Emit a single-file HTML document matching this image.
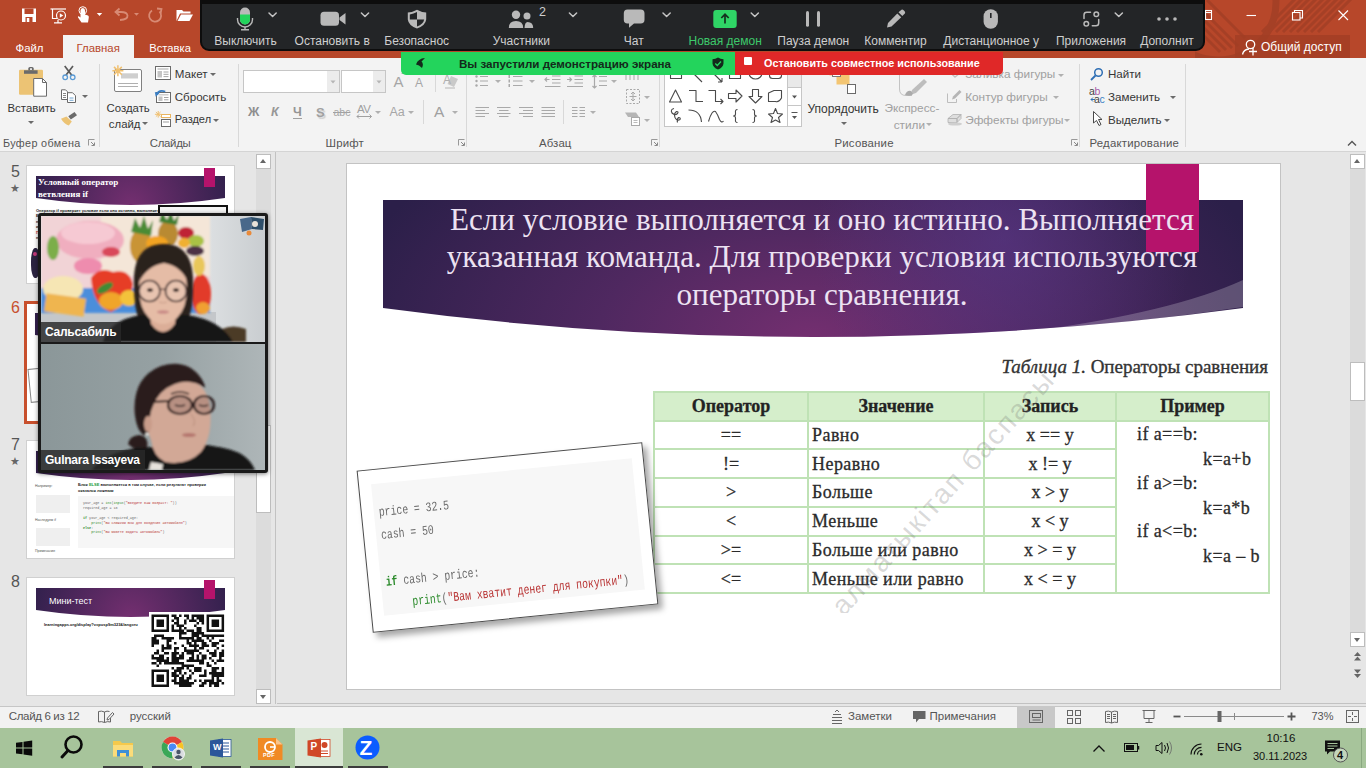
<!DOCTYPE html>
<html lang="ru">
<head>
<meta charset="utf-8">
<title>PowerPoint</title>
<style>
*{box-sizing:border-box;margin:0;padding:0}
html,body{width:1366px;height:768px;overflow:hidden;background:#e6e6e6;font-family:"Liberation Sans","DejaVu Sans",sans-serif;font-size:13px;color:#262626}
.abs{position:absolute}
#titlebar{position:absolute;left:0;top:0;width:1366px;height:58px;background:#b7472a}
#ribbon{position:absolute;left:0;top:58px;width:1366px;height:94px;background:#f3f3f3;border-bottom:1px solid #d4d4d4}
#work{position:absolute;left:0;top:152px;width:1366px;height:553px;background:#e6e6e6}
#status{position:absolute;left:0;top:706px;width:1366px;height:22px;background:#f2f2f2;border-top:1px solid #c6c6c6}
#taskbar{position:absolute;left:0;top:728px;width:1366px;height:40px;background:#a7c49b}
.t{position:absolute;white-space:nowrap;line-height:1}
.tab{position:absolute;top:42.800px;color:#fff;font-size:13px;white-space:nowrap;line-height:1}
.glabel{position:absolute;top:137.500px;font-size:12px;color:#555;white-space:nowrap;line-height:1;letter-spacing:.2px}
.gsep{position:absolute;top:66px;width:1px;height:80px;background:#d8d8d8}
.rt{position:absolute;font-size:13px;color:#363636;white-space:nowrap;line-height:1}
.dis{color:#a0a0a0}
#zoombar{position:absolute;left:200px;top:-2px;width:1005px;height:53px;background:#232527;border:2px solid #0d0d0d;border-radius:0 0 9px 9px}
.zl{position:absolute;top:35px;font-size:12px;color:#cfcfcf;white-space:nowrap;line-height:1;transform:translateX(-50%)}

#slide{position:absolute;left:346px;top:163px;width:935px;height:527px;background:#fff;border:1px solid #c3c3c3;overflow:hidden}
#slidein{position:absolute;left:-347px;top:-164px;width:1366px;height:768px}
#title{position:absolute;left:392px;top:200.500px;width:860px;text-align:center;font-family:"Liberation Serif",serif;font-size:31.1px;line-height:37.900px;color:#ece2f2;white-space:nowrap}
#cap{position:absolute;right:98px;top:357px;font-family:"Liberation Serif",serif;font-size:19px;-webkit-text-stroke:.35px #333;color:#333;white-space:nowrap;line-height:20px}
#tbl{position:absolute;left:653px;top:391px;width:615px;-webkit-text-stroke:.3px #2b2b2b;border-collapse:collapse;font-family:"Liberation Serif",serif;font-size:18px;color:#2b2b2b;table-layout:fixed}
#tbl td,#tbl th{border:2px solid #bfe2b5;height:28.8px;padding:0;line-height:20px;vertical-align:middle;white-space:nowrap}
#tbl th{background:#d5eecb;font-weight:bold;height:28.5px;color:#222}
#tbl td.c{text-align:center}
#tbl td.l{padding-left:3px;letter-spacing:.45px}
#ex{position:relative;vertical-align:top!important}
#ex div{position:absolute;line-height:20px;white-space:nowrap;letter-spacing:.4px}
#wm{position:absolute;left:197px;top:250px;font-size:28px;line-height:32px;color:rgba(110,110,110,.26);transform:rotate(-48deg);transform-origin:0 50%;white-space:nowrap;letter-spacing:2.100px}
#card{position:absolute;left:364px;top:455.500px;width:287px;height:163px;background:#fff;border:1px solid #4a4a4a;transform:rotate(-5.7deg);box-shadow:4px 5px 6px rgba(0,0,0,.35)}
#card .in{position:absolute;left:12px;top:14px;width:262px;height:132px;background:#f7f7f7}
#card .ln{position:absolute;font-family:"Liberation Mono",monospace;font-size:9.8px;line-height:1;white-space:pre;color:#6a6a6a;transform:scale(1,1.35);transform-origin:0 0}

.th{position:absolute;left:26px;width:209px;height:119px;background:#fff;border:1px solid #d0d0d0;overflow:hidden}
.thn{position:absolute;left:11px;font-size:16px;color:#555;line-height:1}
.star{position:absolute;left:10px;font-size:11px;color:#666;line-height:1}
.sbtn{position:absolute;width:15px;height:15px;background:#fff;border:1px solid #bdbdbd}
.sbtn:after{content:"";position:absolute;left:3px;top:4px;border:3.500px solid transparent}
.sbtn.up:after{border-bottom:4px solid #666;border-top:0}
.sbtn.dn:after{border-top:4px solid #666;border-bottom:0;top:5px}
#vid{position:absolute;left:38px;top:213px;width:230px;height:260px;background:#1a1a1a;border-radius:3px;box-shadow:0 1px 4px rgba(0,0,0,.5)}
.vname{position:absolute;left:0;bottom:0;height:20px;background:rgba(40,40,40,.82);color:#fff;font-weight:bold;font-size:12px;line-height:20px;letter-spacing:-.25px;padding:0 5px 0 4px;white-space:nowrap}

.rt{font-size:11.400px}
.arr{position:absolute;width:0;height:0;border-left:3px solid transparent;border-right:3px solid transparent;border-top:3px solid #6a6a6a;margin-left:-.5px}
.arr.d{border-top-color:#b0b0b0}
.lnch{position:absolute;top:139px;width:7px;height:7px}

.st{position:absolute;top:711px;font-size:11.500px;color:#555;white-space:nowrap;line-height:1}
.tk{position:absolute;font-size:11.500px;color:#111;white-space:nowrap;line-height:1}
.ul{position:absolute;top:766px;height:2px;background:#3c3c3c}
</style>
</head>
<body>
<div id="titlebar">
<svg class="abs" style="left:1195px;top:0" width="171" height="58" viewBox="1195 0 171 58">
 <g fill="none" stroke="#a03e25" opacity=".75">
  <circle cx="1218" cy="2" r="58" stroke-width="7"/>
  <path d="M1296 -2L1262 32" stroke-width="3"/><path d="M1303 -2L1269 32" stroke-width="3"/><path d="M1310 -2L1276 32" stroke-width="3"/><path d="M1317 -2L1283 32" stroke-width="3"/><path d="M1324 -2L1290 32" stroke-width="3"/><path d="M1331 -2L1297 32" stroke-width="3"/><path d="M1338 -2L1304 32" stroke-width="3"/><path d="M1345 -2L1311 32" stroke-width="3"/><path d="M1352 -2L1318 32" stroke-width="3"/>
  <path d="M1200 8L1238 46" stroke-width="3"/><path d="M1200 16L1232 48" stroke-width="3"/><path d="M1200 24L1226 50" stroke-width="3"/><path d="M1200 32L1220 52" stroke-width="3"/><path d="M1207 0L1245 38" stroke-width="3"/>
 </g>
 <rect x="1235" y="35" width="115" height="23" fill="#a13d24" opacity=".8"/>
 <g fill="none" stroke="#fff" stroke-width="1.100">
  <path d="M1246.500 15.500H1256"/><rect x="1292.500" y="12.500" width="7.500" height="7.500"/><path d="M1294.500 12.500V10.500H1302.500V18H1300"/><path d="M1338.500 10.500L1348 20M1348 10.500L1338.500 20"/>
  <rect x="1205.500" y="10.500" width="6" height="9"/><path d="M1205.500 12.500H1211.500"/>
  <circle cx="1250.500" cy="44.500" r="4.200" stroke-width="1.300"/><path d="M1242.500 54.500Q1243.500 49.500 1249 49" stroke-width="1.300"/><path d="M1249 51.500H1257M1253 47.500V55.500" stroke-width="1.300"/>
 </g>
</svg>
<div class="t" style="left:1261px;top:41px;font-size:12px;color:#fff">Общий доступ</div>
<svg class="abs" style="left:0;top:0" width="200" height="34" viewBox="0 0 200 34">
 <g fill="#fff">
  <path d="M22 8.500H36V22H22Z"/><rect x="24.500" y="8.500" width="9" height="5.500" fill="#b7472a"/><rect x="25.500" y="17" width="7" height="5" fill="#b7472a"/><rect x="26.800" y="18" width="2.500" height="4" fill="#fff"/>
 </g>
 <g fill="none" stroke="#fff" stroke-width="1.200">
  <path d="M50.500 9H66"/><path d="M52.500 9V18.500H57"/><circle cx="61" cy="15.500" r="4.500"/><path d="M59.800 13.300V17.700L63.300 15.500Z" fill="#fff" stroke="none"/><path d="M58 20V22.500M54 22.800H62"/>
 </g>
 <g fill="#fff"><path d="M80.500 10.500Q80.500 8 82.800 8Q85 8 85 10.500V14.500L88 15.500Q89 16 88.800 17.500L88 22.500H81.500L78 17.500Q77.500 16.300 78.800 16.300L80.500 17.500Z"/><path d="M96.800 13H102.200L99.500 16Z"/></g>
 <circle cx="82.800" cy="10.500" r="3.800" fill="none" stroke="#fff" stroke-width="1"/>
 <g fill="none" stroke="#d88a74" stroke-width="1.800"><path d="M120 20Q128 19.500 127.500 15.500Q127 12 121 12H116"/><path d="M119.500 8.500L115.500 12L119.500 15.500"/><path d="M159.500 11.500A6 6 0 1 1 152 10.500"/><path d="M157 8.500L161.500 9L160.500 13.500"/></g>
 <path d="M134 13H139L136.500 15.800Z" fill="#d88a74"/>
 <g fill="#fff"><path d="M176.500 21V10H182L183.500 11.500H190.500V13.500H180L176.500 21Z"/><path d="M181 14.500H193L189.500 21H177.500Z"/></g>
</svg>
<div class="abs" style="left:63px;top:35px;width:71px;height:23px;background:#f3f3f3"></div>
<div class="tab" style="left:15.500px;font-size:11.400px">Файл</div>
<div class="tab" style="left:76.500px;font-size:11.400px;color:#b7472a">Главная</div>
<div class="tab" style="left:149.300px;font-size:11.200px">Вставка</div>
</div>
<div id="ribbon"></div>
<div id="rib">
<div class="gsep" style="left:99px;top:64px;height:83px"></div>
<div class="gsep" style="left:238px;top:64px;height:83px"></div>
<div class="gsep" style="left:466px;top:64px;height:83px"></div>
<div class="gsep" style="left:659px;top:64px;height:83px"></div>
<div class="gsep" style="left:1079px;top:64px;height:83px"></div>
<div class="gsep" style="left:1185px;top:64px;height:83px"></div><div class="gsep" style="left:435px;top:70px;height:22px"></div><div class="gsep" style="left:423px;top:100px;height:24px"></div><div class="gsep" style="left:563px;top:100px;height:24px"></div>
<div class="rt " style="left:7.5px;top:103.4px;font-size:11.4px;">Вставить</div>
<div class="arr" style="left:28.5px;top:121.2px"></div>
<div class="rt " style="left:106.5px;top:103.4px;font-size:11.4px;">Создать</div>
<div class="rt " style="left:108.8px;top:118.8px;font-size:11.4px;">слайд</div>
<div class="arr" style="left:142.5px;top:122.0px"></div>
<div class="rt " style="left:174.7px;top:68.0px;font-size:11.6px;">Макет</div>
<div class="arr" style="left:210.8px;top:72.5px"></div>
<div class="rt " style="left:174.7px;top:91.1px;font-size:11.6px;">Сбросить</div>
<div class="rt " style="left:174.7px;top:114.3px;font-size:11px;">Раздел</div>
<div class="arr" style="left:213.5px;top:118.5px"></div>
<div class="arr" style="left:82.9px;top:94.5px"></div>
<div class="rt " style="left:807.4px;top:103.0px;font-size:12.0px;">Упорядочить</div>
<div class="arr" style="left:841.2px;top:122.0px"></div>
<div class="rt dis" style="left:884.5px;top:103.0px;font-size:11.8px;">Экспресс-</div>
<div class="rt dis" style="left:893.7px;top:119.5px;font-size:11.8px;">стили</div>
<div class="arr d" style="left:926.8px;top:123.0px"></div>
<div class="rt dis" style="left:965.2px;top:69.1px;font-size:11.8px;">Заливка фигуры</div>
<div class="arr d" style="left:1058.5px;top:73.5px"></div>
<div class="rt dis" style="left:965.2px;top:91.5px;font-size:11.8px;">Контур фигуры</div>
<div class="arr d" style="left:1053.3px;top:96.0px"></div>
<div class="rt dis" style="left:965.2px;top:114.5px;font-size:11.8px;">Эффекты фигуры</div>
<div class="arr d" style="left:1064.8px;top:119.0px"></div>
<div class="rt " style="left:1108px;top:68.3px;font-size:11.6px;">Найти</div>
<div class="rt " style="left:1108px;top:90.8px;font-size:11.6px;">Заменить</div>
<div class="arr" style="left:1170.5px;top:95.5px"></div>
<div class="rt " style="left:1108px;top:114.3px;font-size:11.6px;">Выделить</div>
<div class="arr" style="left:1164.0px;top:119.0px"></div>
<div class="glabel" style="left:3px;letter-spacing:.35px;font-size:10.800px">Буфер обмена</div>
<div class="glabel" style="left:149.800px;font-size:11.400px;letter-spacing:-.3px">Слайды</div>
<div class="glabel" style="left:325.500px;font-size:11.400px;letter-spacing:.2px">Шрифт</div>
<div class="glabel" style="left:539px;font-size:11.400px;letter-spacing:.1px">Абзац</div>
<div class="glabel" style="left:834.500px;font-size:11.400px">Рисование</div>
<div class="glabel" style="left:1089.500px;font-size:11.400px">Редактирование</div>
<svg class="lnch" style="left:88px" viewBox="0 0 7 7"><path d="M.5 6.500V.5H6.500" fill="none" stroke="#999" stroke-width="1"/><path d="M3 3L6 6M6.500 3.500V6.500H3.500" fill="none" stroke="#888" stroke-width="1"/></svg>
<svg class="lnch" style="left:458px" viewBox="0 0 7 7"><path d="M.5 6.500V.5H6.500" fill="none" stroke="#999" stroke-width="1"/><path d="M3 3L6 6M6.500 3.500V6.500H3.500" fill="none" stroke="#888" stroke-width="1"/></svg>
<svg class="lnch" style="left:651px" viewBox="0 0 7 7"><path d="M.5 6.500V.5H6.500" fill="none" stroke="#999" stroke-width="1"/><path d="M3 3L6 6M6.500 3.500V6.500H3.500" fill="none" stroke="#888" stroke-width="1"/></svg>
<svg class="lnch" style="left:1071px" viewBox="0 0 7 7"><path d="M.5 6.500V.5H6.500" fill="none" stroke="#999" stroke-width="1"/><path d="M3 3L6 6M6.500 3.500V6.500H3.500" fill="none" stroke="#888" stroke-width="1"/></svg>
<svg class="abs" style="left:0;top:58px" width="1366" height="94" viewBox="0 58 1366 94">
<!-- paste -->
<rect x="19" y="69.800" width="24" height="25" rx="1.200" fill="#ecc374"/><rect x="24" y="70.300" width="13.600" height="3.500" fill="#6b6b6b"/><path d="M28.300 70.500V68.500Q28.300 67 29.800 67H32.200Q33.700 67 33.700 68.500V70.500Z" fill="#6b6b6b"/><rect x="30" y="68.300" width="2" height="1.600" fill="#f3f3f3"/>
<path d="M33.700 78.500H42.500L46.500 82.500V96.200H33.700Z" fill="#fff" stroke="#6b6b6b" stroke-width="1"/><path d="M42.500 78.500V82.500H46.500" fill="none" stroke="#6b6b6b" stroke-width="1"/>
<!-- cut -->
<g fill="none" stroke="#5a5a5a" stroke-width="1.700"><path d="M64.700 66L71.800 75.200M73 66L65.900 75.200"/></g><circle cx="65.200" cy="77.300" r="2.300" fill="none" stroke="#5b9bd5" stroke-width="1.300"/><circle cx="72.700" cy="77.300" r="2.300" fill="none" stroke="#5b9bd5" stroke-width="1.300"/>
<!-- copy -->
<g fill="#fff" stroke="#6a6a6a"><path d="M61.500 89.800H65.500L67.500 91.800V99.500H61.500Z"/><path d="M67.500 92.700H72.500L75.500 95.700V102.500H67.500Z"/></g><path d="M63 93.500H66M63 95.500H66M63 97.500H66" stroke="#6a6a6a" stroke-width=".8"/><path d="M69.500 98H73.500M69.500 100.300H73.500" stroke="#4f8fc6" stroke-width=".8"/>
<!-- painter -->
<path d="M68.300 116.200L74.500 112L77 115.200L70.800 119.600Z" fill="#6a6a6a"/><path d="M61 118.800L66.500 116.400L71.800 121.400L68.800 125.500Q64 124 61 118.800Z" fill="#ecc374"/>
<!-- new slide -->
<rect x="114.500" y="69.500" width="27" height="22" rx="1.500" fill="#fff" stroke="#808080"/><rect x="121" y="73.300" width="17" height="5.200" fill="#cfcfcf"/><path d="M118 83.500H138M118 86.500H138" stroke="#b0b0b0"/>
<g stroke="#f0c070" stroke-width="1.500"><path d="M117.900 65.300V76.300M112.400 70.800H123.400M114 66.900L121.800 74.700M121.800 66.900L114 74.700"/></g>
<!-- layout -->
<rect x="155.500" y="66.500" width="15" height="13" fill="#fff" stroke="#6a6a6a"/><path d="M157.500 69H168.500" stroke="#c8c8c8" stroke-width="1.600"/><rect x="157.500" y="71" width="4.500" height="6.500" fill="#c4c4c4"/><path d="M163.500 72H168.500M163.500 74.300H168.500M163.500 76.600H168.500" stroke="#9a9a9a" stroke-width=".9"/>
<!-- reset -->
<rect x="156.500" y="92.500" width="14" height="10" fill="#fff" stroke="#6a6a6a"/><path d="M158.500 94.800H168.500" stroke="#c8c8c8" stroke-width="1.300"/><rect x="158.500" y="96.500" width="4" height="4.500" fill="#c4c4c4"/><path d="M164 97.500H168.500M164 99.800H168.500" stroke="#9a9a9a" stroke-width=".9"/>
<path d="M156.800 94.500Q158.500 89.500 165.300 91.500" fill="none" stroke="#3b7fc4" stroke-width="1.700"/><path d="M154.800 92L159.500 93.300L155.700 96.800Z" fill="#3b7fc4"/>
<!-- section -->
<rect x="161.500" y="114.500" width="9" height="3" fill="#fff" stroke="#eab560"/><rect x="161.500" y="119.500" width="9" height="7" fill="#fff" stroke="#6a6a6a"/><path d="M163 122H169" stroke="#c4c4c4" stroke-width="1.600"/>
<g stroke="#f0c070" stroke-width="1"><path d="M158.200 111V117.600M154.900 114.300H161.500M155.900 112L160.500 116.600M160.500 112L155.900 116.600"/></g>
<!-- font combos -->
<rect x="243.500" y="70.500" width="96" height="22" fill="#fff" stroke="#c6c6c6"/><rect x="327" y="71" width="12" height="21" fill="#ececec"/>
<rect x="341.500" y="70.500" width="44" height="22" fill="#fff" stroke="#c6c6c6"/><rect x="373" y="71" width="12" height="21" fill="#ececec"/>
<path d="M330.500 80.500H335.500L333 83.500Z M376.500 80.500H381.500L379 83.500Z" fill="#b5b5b5"/>
<!-- paragraph icons (disabled grey) -->
<g stroke="#a9a9a9" stroke-width="1.200" fill="none">
 <path d="M480 76.500H488M480 81H488M480 85.500H488"/>
 <path d="M513 76.500H522.500M513 81H522.500M513 85.500H522.500"/>
 <path d="M552 76H560.500M552 79.500H560.500M552 83H560.500M545 86.500H560.500"/><path d="M549.500 79.500H545M547 77.500L545 79.500L547 81.500"/>
 <path d="M574.500 76H583M574.500 79.500H583M574.500 83H583M567 86.500H583"/><path d="M567 79.500H571.500M569.500 77.500L571.500 79.500L569.500 81.500"/>
 <path d="M599 76.500H607M599 81H607M599 85.500H607"/><path d="M594.500 75V88M592.500 77L594.500 75L596.500 77M592.500 86L594.500 88L596.500 86"/>
 <path d="M475.500 107.500H489M475.500 110.500H485M475.500 113.500H489M475.500 116.500H485"/>
 <path d="M497 107.500H510.500M499 110.500H508.500M497 113.500H510.500M499 116.500H508.500"/>
 <path d="M519 107.500H533M523 110.500H533M519 113.500H533M523 116.500H533"/>
 <path d="M541.500 107.500H555M541.500 110.500H555M541.500 113.500H555M541.500 116.500H555"/>
 <path d="M572 107.500H577.500M579.500 107.500H585M572 110.500H577.500M579.500 110.500H585M572 113.500H577.500M579.500 113.500H585M572 116.500H577.500M579.500 116.500H585"/>
 <path d="M626 74V80M630 74V80M634 74V80M638 74V80" stroke-width="1"/>
 <rect x="626.500" y="89.500" width="13" height="14" stroke-dasharray="2 1.500" stroke-width="1"/><path d="M633 92V101M631 94L633 92L635 94M631 99L633 101L635 99M629.500 96.500H636.500" stroke-width="1"/>
 <rect x="631.500" y="117.500" width="8" height="8" fill="#fff" stroke-width="1"/><path d="M633.500 120.500H637.500M633.500 122.500H637.500" stroke-width=".8"/>
</g>
<path d="M625 112.500H636L639 117H628Z" fill="#b5b5b5"/>
<g fill="#a9a9a9"><circle cx="476.500" cy="76.500" r="1.200"/><circle cx="476.500" cy="81" r="1.200"/><circle cx="476.500" cy="85.500" r="1.200"/><rect x="508.500" y="75" width="1.500" height="3"/><rect x="508.500" y="79.500" width="1.500" height="3"/><rect x="508.500" y="84" width="1.500" height="3"/></g>
<!-- clear format icon -->
<path d="M451 76L458 79L454 87L447.500 84Z" fill="#c9c9c9"/><path d="M445 88H455" stroke="#b5b5b5"/>
<!-- font color underline etc -->
<path d="M293 118.500H302" stroke="#a0a0a0" stroke-width="1"/>
<path d="M333 112.500H350.500" stroke="#a0a0a0" stroke-width="1"/>
<path d="M357 116.500H371.500M359 114.500L357 116.500L359 118.500M369.500 114.500L371.500 116.500L369.500 118.500" stroke="#a0a0a0" stroke-width="1" fill="none"/>
<!-- shapes gallery -->
<rect x="664.500" y="66.500" width="137" height="60" fill="#fff" stroke="#c6c6c6"/><path d="M787.500 66.500V126.500M787.500 87.500H801.500M787.500 105.500H801.500" stroke="#c6c6c6" fill="none"/>
<rect x="788" y="67" width="13" height="20" fill="#e9e9e9"/>
<path d="M792 95.500H797L794.500 98.500Z" fill="#555"/><path d="M791.500 112.500H797.500" stroke="#555"/><path d="M792 116H797L794.500 119Z" fill="#555"/>
<g fill="none" stroke="#4a4a4a" stroke-width="1.100" stroke-linejoin="round">
 <rect x="670.500" y="68.500" width="11" height="10"/><path d="M690 70L702 82M710 70L722 82M722 82V78M722 82H718"/><rect x="729.500" y="66.500" width="11" height="12"/><ellipse cx="755.500" cy="73" rx="6.500" ry="6"/><rect x="769.500" y="66.500" width="12" height="12" rx="3"/>
 <path d="M675.500 90L681.500 102H669.500Z"/>
 <path d="M689 90.500H696V101.500H703"/>
 <path d="M708.500 90.500H715.500V101.500H723M720.500 99L723 101.500L720.500 104"/>
 <path d="M728.500 93.500H736V90L742 96L736 102V98.500H728.500Z"/>
 <path d="M752.500 89.500H758.500V96.500H762L755.500 103L749 96.500H752.500Z"/>
 <path d="M768.500 93L774 90.500H781.500V98Q779 102.500 775.500 101.500H768.500Z"/>
 <path d="M674 108.500Q670 109.500 672 113Q675 116 677.500 113.500Q679 111.500 676.500 111.500Q673.500 113.500 675 117.500Q677 121.500 680 119.500Q681 117.500 678.500 117.500Q676.500 119.500 677.500 122.500"/>
 <path d="M688.500 110Q700.500 110 701.500 122"/>
 <path d="M708.500 121.500Q712 109.500 715.500 111.500Q718 115 719.500 119.500Q721.500 123.500 723.500 121"/>
 <path d="M737.500 109.500Q735 109.500 735.500 112.500V114Q735.500 116 733.500 116Q735.500 116 735.500 118V119.500Q735 122.500 737.500 122.500"/>
 <path d="M752.500 109.500Q755 109.500 754.500 112.500V114Q754.500 116 756.500 116Q754.500 116 754.500 118V119.500Q755 122.500 752.500 122.500"/>
 <path d="M775.500 108.500L777.500 113.500L782.500 114L778.500 117.500L780 122.500L775.500 120L771 122.500L772.500 117.500L768.500 114L773.500 113.500Z"/>
</g>
<!-- arrange -->
<rect x="829.500" y="64.500" width="11" height="11" fill="#f3c572"/><rect x="836.500" y="71.500" width="13" height="13" fill="#f3c572"/><rect x="832.500" y="68.500" width="8" height="8" fill="#fff" stroke="#7a7a7a"/><rect x="847.500" y="84.500" width="8" height="9" fill="#fff" stroke="#6a6a6a"/>
<!-- quick styles -->
<path d="M899.500 62V89Q899.500 95.500 906 95.500H912" fill="none" stroke="#c3c3c3"/><path d="M924 79L927 82L916 93L910 95L912 90Z" fill="#bdbdbd"/><path d="M905 95Q907 90 911 91L913 94Q911 97 905 95Z" fill="#ababab"/>
<!-- shape fill/outline/effects icons -->
<path d="M947.500 70L955 77L960 73" fill="none" stroke="#c3c3c3" stroke-width="1.400"/>
<path d="M947.500 93.500V102.500H956.500V99" fill="none" stroke="#bdbdbd"/><path d="M953 96.500L959.500 90L961.500 92L955 98.500L952 99.500Z" fill="#b5b5b5"/>
<path d="M948 118.500L953 114.500H961L957 118.500Z M948 118.500H957V122.500H948Z M957 118.500L961 114.500V118.500L957 122.500Z" fill="#dedede" stroke="#b0b0b0" stroke-width=".8"/>
<ellipse cx="955" cy="124" rx="7" ry="1.600" fill="#cfcfcf"/>
<!-- find/replace/select -->
<circle cx="1098.500" cy="72.500" r="3.800" fill="none" stroke="#2f6fb4" stroke-width="1.500"/><path d="M1095.500 75.500L1091 80" stroke="#2f6fb4" stroke-width="1.800"/>
<path d="M1093.500 111.500V123L1096.500 120.500L1099 125.500L1101 124.500L1098.500 119.500H1102Z" fill="#fff" stroke="#4a4a4a" stroke-width="1"/>
<path d="M1093 101.500L1091 99.500L1093 97.500M1091 99.500H1095" fill="none" stroke="#2f6fb4" stroke-width="1"/>
<!-- collapse -->
<path d="M1348 145.500L1352 141.500L1356 145.500" fill="none" stroke="#555" stroke-width="1.400"/>
</svg>
<div class="t" style="left:1089px;top:88px;font-size:10.500px;color:#444;line-height:7.500px;letter-spacing:-.3px">a<span style="color:#a85aa8">b</span><br><span style="margin-left:5px">a<span style="color:#3b7fc4">c</span></span></div>
<div class="t dis" style="left:393.500px;top:74px;font-size:15px;color:#a6a6a6">A</div><div class="t" style="left:415px;top:77px;font-size:12px;color:#a6a6a6">A</div>
<div class="arr d" style="left:401px;top:72px;transform:rotate(180deg);border-width:0 2px 2.500px 2px;border-style:solid;border-color:transparent transparent #b5b5b5 transparent;transform:none"></div>
<div class="t" style="left:443px;top:74px;font-size:12px;color:#b0b0b0">A</div>
<div class="t" style="left:248px;top:106px;font-size:12.500px;font-weight:bold;color:#8e8e8e">Ж</div>
<div class="t" style="left:271px;top:106px;font-size:12.500px;font-style:italic;font-weight:bold;color:#979797">К</div>
<div class="t" style="left:293px;top:106px;font-size:12.500px;font-weight:bold;color:#959595">Ч</div>
<div class="t" style="left:316px;top:106px;font-size:13px;font-weight:bold;color:#a0a0a0;text-shadow:1.500px 1.500px 1px #cfcfcf">S</div>
<div class="t" style="left:333.500px;top:107px;font-size:10.500px;color:#a6a6a6">abc</div>
<div class="t" style="left:357px;top:103.500px;font-size:11.500px;color:#a0a0a0;letter-spacing:-.6px">AV</div>
<div class="t" style="left:389.500px;top:106px;font-size:12.500px;color:#a6a6a6">Aa</div>
<div class="t" style="left:434px;top:104px;font-size:15.500px;color:#a0a0a0">A</div>
<div class="arr d" style="left:375.0px;top:111.0px"></div><div class="arr d" style="left:408.8px;top:111.0px"></div><div class="arr d" style="left:452.6px;top:111.0px"></div><div class="arr d" style="left:495.4px;top:79.5px"></div><div class="arr d" style="left:529.0px;top:79.5px"></div><div class="arr d" style="left:611.7px;top:79.5px"></div><div class="arr d" style="left:590.3px;top:111.0px"></div><div class="arr d" style="left:644.7px;top:95.5px"></div><div class="arr d" style="left:644.7px;top:118.5px"></div>
</div>
<div id="work"></div>

<div id="slide"><div id="slidein">
<svg class="abs" style="left:383px;top:200px" width="861" height="140" viewBox="0 0 861 140">
<defs>
<radialGradient id="bg" cx="430" cy="140" r="480" gradientUnits="userSpaceOnUse" gradientTransform="translate(0 140) scale(1 .55) translate(0 -140)">
<stop offset="0" stop-color="#742f70"/><stop offset=".45" stop-color="#4f2860"/><stop offset="1" stop-color="#2b1f49"/>
</radialGradient>
<radialGradient id="bg2" cx="620" cy="40" r="190" gradientUnits="userSpaceOnUse"><stop offset="0" stop-color="#5a3a8e" stop-opacity=".55"/><stop offset="1" stop-color="#5a3a8e" stop-opacity="0"/></radialGradient>
</defs>
<path d="M0 0H860V108Q430 166 0 108Z" fill="url(#bg)"/><path d="M0 0H860V108Q430 166 0 108Z" fill="url(#bg2)"/>
<path d="M860 80V107Q760 122 650 131Q790 112 860 80Z" fill="#fff" opacity=".22"/>
</svg>
<div class="abs" style="left:1146px;top:164px;width:53px;height:88px;background:#b5136b"></div>
<div id="title">Если условие выполняется и оно истинно. Выполняется<br>указанная команда. Для проверки условия используются<br>операторы сравнения.</div>
<div id="cap"><i>Таблица 1.</i> Операторы сравнения</div>
<table id="tbl">
<colgroup><col style="width:154px"><col style="width:176px"><col style="width:132px"><col style="width:153px"></colgroup>
<tr><th>Оператор</th><th>Значение</th><th>Запись</th><th>Пример</th></tr>
<tr><td class="c">==</td><td class="l">Равно</td><td class="c">x == y</td><td rowspan="6" id="ex"><div style="left:20px;top:2px">if a==b:</div><div style="left:86px;top:27px">k=a+b</div><div style="left:20px;top:51px">if a&gt;=b:</div><div style="left:86px;top:76px">k=a*b</div><div style="left:20px;top:99px">if a&lt;=b:</div><div style="left:86px;top:124px">k=a – b</div></td></tr>
<tr><td class="c">!=</td><td class="l">Неравно</td><td class="c">x != y</td></tr>
<tr><td class="c">&gt;</td><td class="l">Больше</td><td class="c">x &gt; y</td></tr>
<tr><td class="c">&lt;</td><td class="l">Меньше</td><td class="c">x &lt; y</td></tr>
<tr><td class="c">&gt;=</td><td class="l">Больше или равно</td><td class="c">x &gt; = y</td></tr>
<tr><td class="c">&lt;=</td><td class="l">Меньше или равно</td><td class="c">x &lt; = y</td></tr>
</table>
<div class="abs" style="left:640px;top:345px;width:640px;height:268px;overflow:hidden"><div id="wm">алматыкітап баспасы</div></div>
<div id="card"><div class="in"></div>
<div class="ln" style="left:17px;top:37px">price = 32.5</div>
<div class="ln" style="left:17px;top:60px">cash = 50</div>
<div class="ln" style="left:17px;top:107px"><b style="color:#2a8a2a">if</b> cash &gt; price:</div>
<div class="ln" style="left:18px;top:128.500px">    <span style="color:#2a8a2a">print</span>(<span style="color:#b83232">"Вам хватит денег для покупки"</span>)</div>
</div>
</div></div>

<div class="abs" style="left:1350px;top:154px;width:15px;height:493px;background:#dbdbdb"></div>
<div class="sbtn up" style="left:1350px;top:154px"></div>
<div class="sbtn dn" style="left:1350px;top:632px"></div>
<div class="abs" style="left:1350px;top:362px;width:15px;height:39px;background:#fff;border:1px solid #bdbdbd"></div>
<svg class="abs" style="left:1350px;top:650px" width="16" height="32" viewBox="0 0 16 32"><path d="M4 6L7.500 2L11 6Z M4 10.500L7.500 6.500L11 10.500Z M4 19.500L7.500 23.500L11 19.500Z M4 24L7.500 28L11 24Z" fill="#666"/></svg>
<!-- thumbnails pane -->
<div class="abs" style="left:256px;top:154px;width:15px;height:549px;background:#dcdcdc"></div>
<div class="abs" style="left:275px;top:152px;width:1px;height:552px;background:#c2c2c2"></div><div class="abs" style="left:277px;top:703px;width:1089px;height:1px;background:#c2c2c2"></div>
<div class="sbtn up" style="left:256px;top:154px"></div>
<div class="sbtn dn" style="left:256px;top:689px"></div>
<div class="abs" style="left:256px;top:425px;width:15px;height:88px;background:#fff;border:1px solid #bdbdbd"></div>
<div class="thn" style="top:164px">5</div><div class="star" style="top:183px">★</div>
<div class="thn" style="top:300px;color:#c8502d">6</div>
<div class="thn" style="top:437px">7</div><div class="star" style="top:456px">★</div>
<div class="thn" style="top:574px">8</div>
<div class="th" id="th5" style="top:165px">
 <svg class="abs" style="left:9px;top:10px" width="190" height="30" viewBox="0 0 190 30"><defs><radialGradient id="bg5" cx="95" cy="30" r="110" gradientUnits="userSpaceOnUse"><stop offset="0" stop-color="#742f70"/><stop offset="1" stop-color="#2b1f49"/></radialGradient></defs><path d="M0 0H189V22Q95 36 0 22Z" fill="url(#bg5)"/></svg>
 <div class="abs" style="left:177px;top:2px;width:11px;height:19px;background:#b5136b"></div>
 <div class="abs" style="left:11px;top:11px;font:bold 9px/11.5px 'Liberation Serif',serif;color:#fff;white-space:nowrap">Условный оператор<br>ветвления if</div>
 <div class="abs" style="left:9px;top:42px;font:bold 4px/5px 'Liberation Sans',sans-serif;color:#222;white-space:nowrap">Оператор if проверяет условие если оно истинно, выполняет действие</div>
 <div class="abs" style="left:131px;top:39px;width:70px;height:30px;border:2px solid #111;background:#f4f4f4"></div>
<div class="abs" style="left:9px;top:47px;font:bold 4px/5.500px 'Liberation Sans',sans-serif;color:#222;white-space:nowrap">Если условие истинно — выполняется блок кода<br>после двоеточия с отступом<br>иначе блок пропускается<br><span style="color:#c33">Пример</span><br>программы</div>
 <div class="abs" style="left:4px;top:82px;width:9px;height:30px;border-radius:45%;background:#2b2340"></div><div class="abs" style="left:6px;top:86px;width:4px;height:4px;border-radius:50%;background:#c4387a"></div>
</div>
<div class="abs" style="left:24px;top:301px;width:214px;height:123px;border:3px solid #c8502d;background:#fff;overflow:hidden"><svg class="abs" style="left:8px;top:9px" width="190" height="30" viewBox="0 0 190 30"><path d="M0 0H189V22Q95 36 0 22Z" fill="url(#bg5)"/></svg><div class="abs" style="left:2px;top:62px;width:60px;height:34px;border:1px solid #888;transform:rotate(-5.700deg);background:#fff"></div></div>
<div class="th" id="th7" style="top:440px">
 <svg class="abs" style="left:9px;top:10px" width="190" height="30" viewBox="0 0 190 30"><path d="M0 0H189V22Q95 36 0 22Z" fill="url(#bg5)"/></svg>
 <div class="abs" style="left:51px;top:41px;font:bold 4px/6px 'Liberation Sans',sans-serif;color:#222;white-space:nowrap">Блок <span style="color:#1a9a3a">ELSE</span> выполняется в том случае, если результат проверки<br>оказался ложным</div>
 <div class="abs" style="left:51px;top:55px;width:156px;height:52px;background:#f6f6f6"></div>
 <div class="abs" style="left:56px;top:60px;font:3.4px/4.9px 'Liberation Mono',monospace;color:#666;white-space:pre">your_age = <span style="color:#2a8a2a">int</span>(<span style="color:#2a8a2a">input</span>(<span style="color:#b83232">"Введите ваш возраст: "</span>))
required_age = 18

<b style="color:#2a8a2a">if</b> your_age &lt; required_age:
    <span style="color:#2a8a2a">print</span>(<span style="color:#b83232">"Вы слишком юны для вождения автомобиля"</span>)
<b style="color:#2a8a2a">else</b>:
    <span style="color:#2a8a2a">print</span>(<span style="color:#b83232">"Вы можете водить автомобиль"</span>)</div>
 <div class="abs" style="left:8px;top:43px;font:3.5px/5px 'Liberation Sans',sans-serif;color:#555">Например:</div>
 <div class="abs" style="left:9px;top:54px;width:34px;height:18px;background:#efefef"></div>
 <div class="abs" style="left:8px;top:77px;font:3.5px/5px 'Liberation Sans',sans-serif;color:#555">Наследуем if</div>
 <div class="abs" style="left:9px;top:87px;width:34px;height:18px;background:#efefef"></div>
 <div class="abs" style="left:8px;top:108px;font:3.5px/5px 'Liberation Sans',sans-serif;color:#555">Примечание</div>
</div>
<div class="th" id="th8" style="top:577px">
 <svg class="abs" style="left:9px;top:10px" width="190" height="30" viewBox="0 0 190 30"><path d="M0 0H189V22Q95 36 0 22Z" fill="url(#bg5)"/></svg>
 <div class="abs" style="left:177px;top:2px;width:11px;height:19px;background:#b5136b"></div>
 <div class="abs" style="left:22px;top:18px;font:9px/11px 'Liberation Sans',sans-serif;color:#fff;white-space:nowrap">Мини-тест</div>
 <div class="abs" style="left:17px;top:44px;font:bold 4px/5px 'Liberation Sans',sans-serif;color:#111;white-space:nowrap">learningapps.org/display?v=pusp9m323&amp;lang=ru</div>
 <svg class="abs" id="qr" style="left:122.200px;top:34.200px" width="77.600" height="77.600" viewBox="-1 -1 31 31"><rect x="-1" y="-1" width="31" height="31" fill="#fff"/><path d="M0 0h7v1h-7zM8 0h2v1h-2zM11 0h1v1h-1zM13 0h2v1h-2zM16 0h5v1h-5zM22 0h7v1h-7zM0 1h1v1h-1zM6 1h1v1h-1zM9 1h2v1h-2zM14 1h1v1h-1zM16 1h1v1h-1zM18 1h3v1h-3zM22 1h1v1h-1zM28 1h1v1h-1zM0 2h1v1h-1zM2 2h3v1h-3zM6 2h1v1h-1zM8 2h1v1h-1zM10 2h1v1h-1zM13 2h1v1h-1zM15 2h3v1h-3zM19 2h2v1h-2zM22 2h1v1h-1zM24 2h3v1h-3zM28 2h1v1h-1zM0 3h1v1h-1zM2 3h3v1h-3zM6 3h1v1h-1zM9 3h2v1h-2zM13 3h1v1h-1zM18 3h1v1h-1zM20 3h1v1h-1zM22 3h1v1h-1zM24 3h3v1h-3zM28 3h1v1h-1zM0 4h1v1h-1zM2 4h3v1h-3zM6 4h1v1h-1zM8 4h1v1h-1zM10 4h3v1h-3zM17 4h1v1h-1zM22 4h1v1h-1zM24 4h3v1h-3zM28 4h1v1h-1zM0 5h1v1h-1zM6 5h1v1h-1zM8 5h1v1h-1zM11 5h1v1h-1zM13 5h1v1h-1zM18 5h2v1h-2zM22 5h1v1h-1zM28 5h1v1h-1zM0 6h7v1h-7zM8 6h5v1h-5zM14 6h3v1h-3zM18 6h2v1h-2zM22 6h7v1h-7zM11 7h3v1h-3zM16 7h5v1h-5zM1 8h4v1h-4zM11 8h1v1h-1zM16 8h3v1h-3zM20 8h9v1h-9zM0 9h2v1h-2zM4 9h5v1h-5zM11 9h6v1h-6zM18 9h2v1h-2zM22 9h1v1h-1zM24 9h1v1h-1zM0 10h3v1h-3zM6 10h2v1h-2zM14 10h1v1h-1zM16 10h5v1h-5zM23 10h1v1h-1zM27 10h2v1h-2zM0 11h3v1h-3zM6 11h1v1h-1zM9 11h1v1h-1zM14 11h2v1h-2zM17 11h1v1h-1zM20 11h2v1h-2zM24 11h3v1h-3zM0 12h1v1h-1zM4 12h1v1h-1zM6 12h2v1h-2zM12 12h1v1h-1zM15 12h4v1h-4zM20 12h3v1h-3zM24 12h2v1h-2zM28 12h1v1h-1zM4 13h4v1h-4zM9 13h2v1h-2zM13 13h1v1h-1zM17 13h1v1h-1zM19 13h2v1h-2zM26 13h1v1h-1zM2 14h1v1h-1zM4 14h1v1h-1zM9 14h1v1h-1zM13 14h6v1h-6zM22 14h1v1h-1zM25 14h1v1h-1zM28 14h1v1h-1zM1 15h2v1h-2zM5 15h2v1h-2zM8 15h3v1h-3zM12 15h1v1h-1zM14 15h3v1h-3zM19 15h1v1h-1zM23 15h3v1h-3zM27 15h2v1h-2zM0 16h1v1h-1zM3 16h2v1h-2zM8 16h2v1h-2zM11 16h2v1h-2zM16 16h1v1h-1zM18 16h1v1h-1zM20 16h2v1h-2zM24 16h2v1h-2zM27 16h2v1h-2zM0 17h5v1h-5zM6 17h1v1h-1zM8 17h5v1h-5zM15 17h2v1h-2zM18 17h1v1h-1zM20 17h2v1h-2zM23 17h1v1h-1zM27 17h1v1h-1zM2 18h5v1h-5zM8 18h3v1h-3zM14 18h7v1h-7zM24 18h1v1h-1zM26 18h3v1h-3zM0 19h2v1h-2zM3 19h1v1h-1zM5 19h8v1h-8zM19 19h2v1h-2zM22 19h1v1h-1zM25 19h1v1h-1zM2 20h1v1h-1zM12 20h5v1h-5zM22 20h2v1h-2zM8 21h1v1h-1zM10 21h3v1h-3zM14 21h1v1h-1zM17 21h3v1h-3zM24 21h3v1h-3zM28 21h1v1h-1zM0 22h7v1h-7zM9 22h3v1h-3zM15 22h1v1h-1zM17 22h3v1h-3zM21 22h1v1h-1zM24 22h2v1h-2zM28 22h1v1h-1zM0 23h1v1h-1zM6 23h1v1h-1zM8 23h2v1h-2zM11 23h1v1h-1zM13 23h1v1h-1zM16 23h1v1h-1zM21 23h1v1h-1zM23 23h6v1h-6zM0 24h1v1h-1zM2 24h3v1h-3zM6 24h1v1h-1zM8 24h3v1h-3zM12 24h1v1h-1zM15 24h1v1h-1zM19 24h3v1h-3zM24 24h5v1h-5zM0 25h1v1h-1zM2 25h3v1h-3zM6 25h1v1h-1zM9 25h1v1h-1zM11 25h2v1h-2zM14 25h2v1h-2zM24 25h1v1h-1zM26 25h1v1h-1zM0 26h1v1h-1zM2 26h3v1h-3zM6 26h1v1h-1zM8 26h2v1h-2zM11 26h4v1h-4zM17 26h1v1h-1zM19 26h1v1h-1zM21 26h4v1h-4zM26 26h2v1h-2zM0 27h1v1h-1zM6 27h1v1h-1zM9 27h8v1h-8zM20 27h2v1h-2zM23 27h4v1h-4zM28 27h1v1h-1zM0 28h7v1h-7zM11 28h5v1h-5zM19 28h2v1h-2zM23 28h1v1h-1zM25 28h2v1h-2z" fill="#111"/></svg>
</div>
<div id="status"></div>
<div class="st" style="left:8.800px;letter-spacing:-.35px">Слайд 6 из 12</div>
<div class="st" style="left:129.700px">русский</div>
<div class="st" style="left:848px">Заметки</div>
<div class="st" style="left:929.500px">Примечания</div>
<div class="st" style="left:1311.500px;font-size:11px">73%</div>
<div class="abs" style="left:1017px;top:706px;width:38px;height:22px;background:#c8c8c8"></div>
<svg class="abs" style="left:0;top:704px" width="1366" height="24" viewBox="0 704 1366 24">
<g fill="none" stroke="#666" stroke-width="1">
 <path d="M98.500 711.500Q101.500 710.500 104.500 712V722.500Q101.500 721 98.500 722Z"/><path d="M104.500 712Q107 710.500 109.500 711.500M104.500 722.500Q107.500 721 110.500 722V718"/><path d="M107.500 718L112.500 712.500L114 714L109 719.500L107 720Z" fill="#f3f3f3"/>
 <path d="M833 714.500H841M832 717.500H842M832 720.500H842M832 723.500H842"/><path d="M835 712L837 710L839 712" />
 <rect x="1029.500" y="710.500" width="13" height="12"/><rect x="1032.500" y="713.500" width="8" height="4"/><path d="M1032.500 720H1040.500"/>
 <rect x="1067.500" y="710.500" width="5" height="5"/><rect x="1075.500" y="710.500" width="5" height="5"/><rect x="1067.500" y="718.500" width="5" height="5"/><rect x="1075.500" y="718.500" width="5" height="5"/>
 <path d="M1105.500 711.500Q1108.500 710.500 1111.500 712V723Q1108.500 721.500 1105.500 722.500ZM1111.500 712Q1114.500 710.500 1117.500 711.500V722.500Q1114.500 721.500 1111.500 723M1107 714.500H1110M1107 716.500H1110M1107 718.500H1110M1113 714.500H1116M1113 716.500H1116M1113 718.500H1116"/>
 <path d="M1142.500 710.500H1155.500M1144 710.500V718.500H1154V710.500M1149 718.500V722M1145.500 722.500H1152.500"/>
 <rect x="1346.500" y="710.500" width="12" height="12"/><path d="M1352.500 712V715M1352.500 718V721M1348 716.500H1351M1354 716.500H1357" />
</g>
<path d="M913 711H925.500V719H919L916 722.500V719H913Z" fill="#666"/>
<path d="M1184 716.500H1284" stroke="#8a8a8a" stroke-width="1"/><path d="M1234.500 713V720" stroke="#8a8a8a"/>
<rect x="1217.500" y="711" width="4" height="11" fill="#666"/>
<path d="M1173.500 716.500H1180.500" stroke="#555" stroke-width="1.800"/><path d="M1287.500 716.500H1295.500M1291.500 712.500V720.500" stroke="#555" stroke-width="1.800"/>
</svg>
<div id="taskbar"></div>
<div class="abs" style="left:295px;top:728px;width:48px;height:40px;background:#d9e6d4"></div>
<div class="ul" style="left:103px;width:40px"></div><div class="ul" style="left:152px;width:40px"></div><div class="ul" style="left:201px;width:40px"></div><div class="ul" style="left:250px;width:40px"></div><div class="ul" style="left:295px;width:48px"></div><div class="ul" style="left:348px;width:40px"></div>
<svg class="abs" style="left:0;top:728px" width="1366" height="40" viewBox="0 728 1366 40">
 <g fill="#0a0a0a"><path d="M16 742.800L22.500 741.900V747.600H16ZM23.500 741.700L32.200 740.500V747.600H23.500ZM16 748.600H22.500V754.300L16 753.400ZM23.500 748.600H32.200V755.700L23.500 754.500Z"/></g>
 <circle cx="73.500" cy="744.500" r="8" fill="none" stroke="#0a0a0a" stroke-width="2.600"/><path d="M68 750.500L62 757" stroke="#0a0a0a" stroke-width="3" stroke-linecap="round"/>
 <!-- explorer -->
 <path d="M113 741H120L122 743H133V756.500H113Z" fill="#f5c94c"/><path d="M113 745H133V756.500H113Z" fill="#fbdc7a"/><path d="M117 750H129V756.500H126V753H120V756.500H117Z" fill="#3f8fd6"/>
 <!-- chrome -->
 <circle cx="172.500" cy="747.500" r="11" fill="#e3e3e3"/>
 <path d="M172.500 747.500L163 742A11 11 0 0 1 182 742Z" fill="#e04337"/><path d="M172.500 747.500L182 742A11 11 0 0 1 172.500 758.500Z" fill="#f7c325"/><path d="M172.500 747.500L172.500 758.500A11 11 0 0 1 163 742Z" fill="#3aa757"/>
 <circle cx="172.500" cy="747.500" r="5" fill="#fff"/><circle cx="172.500" cy="747.500" r="3.900" fill="#4a8af4"/>
 <circle cx="178.500" cy="754" r="6" fill="#d9dce0" stroke="#fff" stroke-width=".8"/><circle cx="178.500" cy="752" r="2.200" fill="#4a5568"/><path d="M174.500 757.500Q178.500 752.500 182.500 757.500Q178.500 760.500 174.500 757.500Z" fill="#4a5568"/>
 <!-- word -->
 <rect x="219" y="739.500" width="12" height="17" fill="#fff" stroke="#2b579a" stroke-width=".8"/><path d="M222 743H229M222 746H229M222 749H229M222 752H229" stroke="#2b579a" stroke-width="1"/><path d="M210 740.500L223 738.500V757.500L210 755.500Z" fill="#2b579a"/>
 <!-- foxit -->
 <path d="M258 738H276L282.500 744.500V760H258Z" fill="#f08a24"/><path d="M276 738V744.500H282.500Z" fill="#f9c48c"/><circle cx="270" cy="747" r="5" fill="none" stroke="#fff" stroke-width="1.800"/><path d="M270 747H275" stroke="#fff" stroke-width="1.600"/>
 <!-- ppt -->
 <rect x="317" y="739.500" width="13" height="17" fill="#fff" stroke="#d04727" stroke-width=".8"/><circle cx="324.500" cy="745" r="3" fill="#d04727"/><path d="M320 751H328M320 753.500H328" stroke="#d04727"/><path d="M307.500 740.500L321 738.500V757.500L307.500 755.500Z" fill="#d04727"/>
 <!-- zoom -->
 <circle cx="367.500" cy="747.500" r="12" fill="#0b5cff"/>
 <!-- tray -->
 <path d="M1093.500 751.500L1099 746L1104.500 751.500" fill="none" stroke="#111" stroke-width="1.300"/>
 <rect x="1124.500" y="743.500" width="13" height="8" fill="none" stroke="#111"/><rect x="1126" y="745" width="8" height="5" fill="#111"/><path d="M1138.500 746V749.500" stroke="#111" stroke-width="1.500"/>
 <path d="M1156 745.500H1158.500L1162 742.500V753.500L1158.500 750.500H1156Z" fill="none" stroke="#111"/><path d="M1164.500 745Q1166.500 748 1164.500 751M1167 743Q1170 748 1167 753" fill="none" stroke="#111" stroke-width="1"/><path d="M1169.500 741.500Q1173.500 748 1169.500 754.500" fill="none" stroke="#666" stroke-width=".8"/>
 <g fill="none" stroke="#111" stroke-width="1.200"><path d="M1197.500 754.500A4 4 0 0 1 1201.500 750.500"/><path d="M1194.300 754.500A7.200 7.200 0 0 1 1201.500 747.300"/><path d="M1191 754.500A10.500 10.500 0 0 1 1201.500 744"/></g>
 <circle cx="1201.300" cy="754.300" r="1.300" fill="#111"/>
 <path d="M1325 740.500H1340V751.500H1330L1327 754.500V751.500H1325Z" fill="#111"/><path d="M1327.500 743.500H1337.500M1327.500 746H1337.500M1327.500 748.500H1334" stroke="#a7c49b" stroke-width="1"/>
 <circle cx="1340.500" cy="755" r="7" fill="#c3d5bb" stroke="#555" stroke-width="1"/>
 <path d="M1361.500 728V768" stroke="#8aa880" stroke-width="1"/>
</svg>
<div class="abs" style="left:213px;top:742.500px;font:bold 9px/1 'Liberation Sans',sans-serif;color:#fff">W</div>
<div class="abs" style="left:310.500px;top:742px;font:bold 10px/1 'Liberation Sans',sans-serif;color:#fff">P</div>
<div class="abs" style="left:263px;top:753px;font:bold 5.500px/1 'Liberation Sans',sans-serif;color:#fff;letter-spacing:.3px">PDF</div>
<div class="abs" style="left:359.500px;top:736.500px;font:bold 21px/1 'Liberation Sans',sans-serif;color:#fff">Z</div>
<div class="tk" style="left:1217px;top:742px">ENG</div>
<div class="tk" style="left:1266.500px;top:733px">10:16</div>
<div class="tk" style="left:1253px;top:751px;font-size:11px">30.11.2023</div>
<div class="tk" style="left:1337px;top:749.500px;font-weight:bold;font-size:11px">4</div>
<div id="zoombar"><div class="abs" style="left:0;top:0;width:1001px;height:3.500px;background:#0d0d0d"></div>
<svg class="abs" style="left:-2px;top:0" width="1005" height="34" viewBox="200 0 1005 34" fill="#b9b9b9">
 <!-- mic -->
 <rect x="240" y="7.500" width="10" height="17" rx="5"/>
 <path d="M240 14.500H250V19.500A5 5 0 0 1 240 19.500Z" fill="#23d45c"/>
 <path d="M237.500 18V19.500A7.500 7.500 0 0 0 252.500 19.500V18" fill="none" stroke="#b9b9b9" stroke-width="1.400"/>
 <path d="M245 27V29.500M241 29.800H249" stroke="#b9b9b9" stroke-width="1.400" fill="none"/>
 <!-- chevrons -->
 <g fill="none" stroke="#c4c4c4" stroke-width="1.500" stroke-linecap="round" stroke-linejoin="round">
  <path d="M269 13L272.600 16.500L276.200 13"/><path d="M361.400 13L365 16.500L368.600 13"/><path d="M569.400 13L573 16.500L576.600 13"/><path d="M663 13L666.600 16.500L670.200 13"/><path d="M751.200 13L754.800 16.500L758.400 13"/><path d="M1115.200 13L1118.800 16.500L1122.400 13"/>
 </g>
 <!-- camera -->
 <rect x="320.500" y="11.800" width="18.500" height="14" rx="3.500"/><path d="M339.500 17.500L345.500 13V24.500L339.500 20Z"/>
 <!-- shield -->
 <path d="M417 9.800Q421.500 12.400 426.200 12.600V19.500Q425.500 25.500 417 28.600Q408.500 25.500 407.800 19.500V12.600Q412.500 12.400 417 9.800Z"/>
 <path d="M417 12V19.500H409.800V14.400Q413.600 14 417 12Z" fill="#232527"/><path d="M417 19.500H424.200Q423.400 24 417 26.500Z" fill="#232527"/>
 <!-- participants -->
 <circle cx="516" cy="14.800" r="4.200"/><path d="M508.800 28Q508.800 21 516 21Q523.200 21 523.200 28Z"/>
 <circle cx="527" cy="16" r="3.500"/><path d="M524.500 28Q524.800 22 527.500 22Q533.200 22 533.200 28Z"/>
 <!-- chat -->
 <path d="M627.500 9.500H640.700Q644.500 9.500 644.500 13.300V19.700Q644.500 23.500 640.700 23.500H634L629 27.800V23.500H627.500Q623.800 23.500 623.800 19.700V13.300Q623.800 9.500 627.500 9.500Z"/>
 <!-- share -->
 <rect x="713.300" y="9.900" width="23.400" height="18.200" rx="3" fill="#2fd566"/>
 <path d="M725 23.500V14.500M721.300 18L725 14.300L728.700 18" fill="none" stroke="#15301f" stroke-width="1.700"/>
 <!-- pause -->
 <rect x="806" y="11" width="3" height="15.800" rx="1.500"/><rect x="817" y="11" width="3" height="15.800" rx="1.500"/>
 <!-- pencil -->
 <path d="M898.500 12.200L901.500 9.800Q902.500 9.200 903.400 10.100L904.800 11.500Q905.600 12.500 904.800 13.400L902.300 16Z"/><path d="M897.300 13.400L901.200 17.200L891.500 26.500L887 27.500L888 23Z"/>
 <!-- mouse -->
 <rect x="983.600" y="9.200" width="14.300" height="19.600" rx="7.100"/><rect x="990" y="13" width="1.600" height="5" fill="#232527"/>
 <!-- apps -->
 <g fill="none" stroke="#b9b9b9" stroke-width="1.500" stroke-linecap="round"><path d="M1084 18.500V15Q1084 12.300 1086.800 12.300H1090.500"/><path d="M1098.700 19.500V23Q1098.700 25.800 1096 25.800H1092.300"/><circle cx="1096.300" cy="14.300" r="2.300"/><circle cx="1086.300" cy="23.800" r="2.300"/></g>
 <!-- dots -->
 <circle cx="1159" cy="19" r="1.800"/><circle cx="1167" cy="19" r="1.800"/><circle cx="1175" cy="19" r="1.800"/>
</svg>
<div class="t" style="left:337px;top:6px;font-size:12.500px;color:#cfcfcf">2</div>
<div class="zl" style="left:43.500px">Выключить</div>
<div class="zl" style="left:130.200px">Остановить в</div>
<div class="zl" style="left:214.700px">Безопаснос</div>
<div class="zl" style="left:319.300px">Участники</div>
<div class="zl" style="left:431.700px">Чат</div>
<div class="zl" style="left:523.200px;color:#3dc96b">Новая демон</div>
<div class="zl" style="left:611.300px">Пауза демон</div>
<div class="zl" style="left:693.400px">Комментир</div>
<div class="zl" style="left:789.200px">Дистанционное у</div>
<div class="zl" style="left:889px">Приложения</div>
<div class="zl" style="left:965px">Дополнит</div>
</div>
<div class="abs" style="left:401px;top:52px;width:334px;height:22.500px;background:#23d45c;border-radius:0 0 0 5px"></div>
<div class="abs" style="left:735px;top:52px;width:268px;height:22.500px;background:#e02828;border-radius:0 0 5px 0"></div>
<div class="t" style="left:459px;top:57.700px;font-size:11.600px;font-weight:bold;color:#132a1b">Вы запустили демонстрацию экрана</div>
<div class="t" style="left:764px;top:57.500px;font-size:10.800px;font-weight:bold;color:#fff">Остановить совместное использование</div>
<div class="abs" style="left:743.500px;top:57px;width:8px;height:8px;background:#fff;border-radius:1px"></div>
<svg class="abs" style="left:410px;top:54px" width="320" height="18" viewBox="410 54 320 18">
<path d="M416 64.500Q418 58.500 425 58L421.500 61.500Q424 64 422 68L419 65.500Z" fill="#132a1b"/>
<path d="M718 57.500Q720.500 59 723.500 59.200V63.500Q723 67.500 718 69.500Q713 67.500 712.500 63.500V59.200Q715.500 59 718 57.500Z" fill="#132a1b"/>
<path d="M715.300 63.500L717.300 65.500L721 61.500" fill="none" stroke="#23d45c" stroke-width="1.300"/>
</svg>
<div id="vid">
 <div class="abs" id="v1" style="left:3px;top:3px;width:224px;height:126px;overflow:hidden;background:#d6d8da"><svg class="abs" style="left:0;top:0" width="224" height="126" viewBox="0 0 224 126">
<defs><linearGradient id="wall1" x1="0" x2="1"><stop offset="0" stop-color="#e3e5e7"/><stop offset=".75" stop-color="#dcdfe1"/><stop offset="1" stop-color="#c9cdd0"/></linearGradient>
<filter id="bl1" x="-10%" y="-10%" width="120%" height="120%"><feGaussianBlur stdDeviation="1.1"/></filter><filter id="bl0" x="-10%" y="-10%" width="120%" height="120%"><feGaussianBlur stdDeviation=".8"/></filter></defs>
<rect width="224" height="126" fill="url(#wall1)"/>
<rect x="0" y="96" width="175" height="30" fill="#c4c7ca"/>
<g filter="url(#bl1)">
<rect x="0" y="0" width="169" height="97" fill="#f1d3d6"/>
<rect x="0" y="72" width="169" height="25" fill="#4c8edb"/>
<rect x="60" y="0" width="109" height="60" fill="#f4e6d8"/>
<ellipse cx="49" cy="24" rx="34" ry="19" fill="#f0aebf"/>
<ellipse cx="47" cy="17" rx="27" ry="11" fill="#f6c9d3"/>
<ellipse cx="70" cy="36" rx="9" ry="5" fill="#d9485a"/>
<ellipse cx="12" cy="32" rx="6" ry="12" fill="#7cae4a"/>
<ellipse cx="47" cy="50" rx="14" ry="8" fill="#ee8cae"/>
<ellipse cx="22" cy="73" rx="20" ry="13" fill="#f6e6b4"/>
<rect x="4" y="80" width="40" height="18" fill="#efb550" transform="rotate(8 24 89)"/>
<path d="M50 62Q58 50 72 56Q88 52 92 68Q90 86 70 96Q52 90 50 62Z" fill="#e63c28"/>
<ellipse cx="70" cy="85" rx="12" ry="9" fill="#f0a52c"/>
<ellipse cx="88" cy="82" rx="9" ry="8" fill="#f3c23a"/>
<ellipse cx="64" cy="72" rx="9" ry="4" fill="#3f8a34" transform="rotate(-30 64 72)"/>
<ellipse cx="100" cy="30" rx="11" ry="17" fill="#c99436"/>
<path d="M90 16L94 2L99 12L103 0L107 13L112 4L110 20Z" fill="#4b8b34"/>
<ellipse cx="127" cy="18" rx="10" ry="13" fill="#b98a32"/>
<path d="M118 6L121 -4L126 4L130 -5L133 5L138 -2L136 9Z" fill="#3f7f30"/>
<ellipse cx="116" cy="27" rx="11" ry="7" fill="#f2a324"/>
<ellipse cx="145" cy="17" rx="8" ry="6" fill="#bf2434"/>
<ellipse cx="155" cy="25" rx="8" ry="6" fill="#a9c244"/>
<ellipse cx="143" cy="27" rx="6" ry="5" fill="#f0b030"/>
<ellipse cx="154" cy="35" rx="9" ry="5" fill="#4d3344"/>
<ellipse cx="160" cy="78" rx="10" ry="20" fill="#e23a2a"/>
<ellipse cx="162" cy="92" rx="7" ry="6" fill="#f0a030"/>
<ellipse cx="158" cy="50" rx="6" ry="10" fill="#e9c75a"/>
</g>
<path d="M199 3L210 1L211 13L201 16Z" fill="#49688a"/><path d="M210 1L223 3L222 14L211 13Z" fill="#2f4f6a"/><circle cx="208" cy="17" r="2.5" fill="#e98a3a"/><circle cx="214" cy="8" r="3" fill="#e9e2d8"/>
<g filter="url(#bl0)">
<path d="M181 126V113Q192 108 205 113V126Z" fill="#4b3a28"/>
<path d="M93 70Q91 28 123 28Q154 28 152 72Q152 96 146 104L98 104Q93 92 93 70Z" fill="#2c201c"/>
<path d="M62 126Q68 104 100 99L146 99Q180 104 192 126Z" fill="#151515"/>
<path d="M109 100H135L134 108Q122 124 110 108Z" fill="#dcae98"/>
<path d="M98 72Q97 44 122 43Q146 44 146 72Q146 92 136 102Q122 114 108 102Q98 92 98 72Z" fill="#e5bca6"/>
<path d="M98 66Q100 42 123 40Q146 42 147 66Q140 50 123 47Q106 50 98 66Z" fill="#2c201c"/>
<circle cx="108.500" cy="75" r="10.500" fill="rgba(255,255,255,.12)" stroke="#3b2a2a" stroke-width="1.600"/>
<circle cx="135" cy="75" r="10.500" fill="rgba(255,255,255,.12)" stroke="#3b2a2a" stroke-width="1.600"/>
<path d="M119 74Q122 72 124.500 74" stroke="#3b2a2a" stroke-width="1.200" fill="none"/>
<ellipse cx="109" cy="74" rx="3" ry="1.800" fill="#2a1c1a"/><ellipse cx="135" cy="74" rx="3" ry="1.800" fill="#2a1c1a"/>
<ellipse cx="122" cy="96" rx="6" ry="1.800" fill="#c98a86"/>
<path d="M118 86Q122 88 126 86" stroke="#c79a88" stroke-width="1" fill="none"/>
</g>
</svg><div class="vname">Сальсабиль</div></div>
 <div class="abs" id="v2" style="left:3px;top:131px;width:224px;height:126px;overflow:hidden;background:#929c9e"><svg class="abs" style="left:0;top:0" width="224" height="126" viewBox="0 0 224 126">
<defs><linearGradient id="wall2" x1="0" x2="1"><stop offset="0" stop-color="#8b9799"/><stop offset=".55" stop-color="#96a1a3"/><stop offset="1" stop-color="#aeb6b8"/></linearGradient></defs>
<rect width="224" height="126" fill="url(#wall2)"/>
<g filter="url(#bl0)">
<path d="M87 100Q88 92 98 91Q108 92 106 104Q98 110 87 100Z" fill="#2a1f1e"/>
<path d="M51 126Q62 110 95 104L159 100Q190 104 200 110Q210 116 214 126Z" fill="#141414"/>
<path d="M108 126L110 118L122 120L121 126Z" fill="#e6e2dc"/>
<path d="M104 62Q102 36 134 33Q166 34 169 64Q172 92 160 108Q146 122 124 118Q112 112 110 96Q104 84 104 62Z" fill="#d2a896"/>
<path d="M94 72Q90 34 120 22Q146 14 160 34Q164 40 164 44Q150 34 134 40Q118 46 112 62Q108 70 108 88L104 92Q96 88 94 72Z" fill="#2a1f1e"/>
<ellipse cx="107" cy="80" rx="4" ry="8" fill="#c99c8a"/>
<circle cx="106" cy="90" r="1.600" fill="#f4f0ea"/>
<ellipse cx="139" cy="61" rx="12" ry="9" fill="rgba(60,40,40,.18)" stroke="#2b1c1c" stroke-width="2.200"/>
<ellipse cx="163" cy="61" rx="10" ry="9" fill="rgba(60,40,40,.18)" stroke="#2b1c1c" stroke-width="2.200"/>
<path d="M110 58L128 57" stroke="#2b1c1c" stroke-width="2"/>
<path d="M130 50Q139 46 148 50" stroke="#2a1f1e" stroke-width="1.600" fill="none"/>
<path d="M134 61Q139 63 144 61" stroke="#2a1f1e" stroke-width="1.400" fill="none"/><path d="M158 61Q163 63 167 61" stroke="#2a1f1e" stroke-width="1.400" fill="none"/>
<ellipse cx="148" cy="91" rx="7" ry="2" fill="#b5766e"/>
<path d="M150 70Q156 78 152 82" stroke="#bf9482" stroke-width="1.200" fill="none"/>
</g>
</svg><div class="vname">Gulnara Issayeva</div></div>
</div>
</body>
</html>
